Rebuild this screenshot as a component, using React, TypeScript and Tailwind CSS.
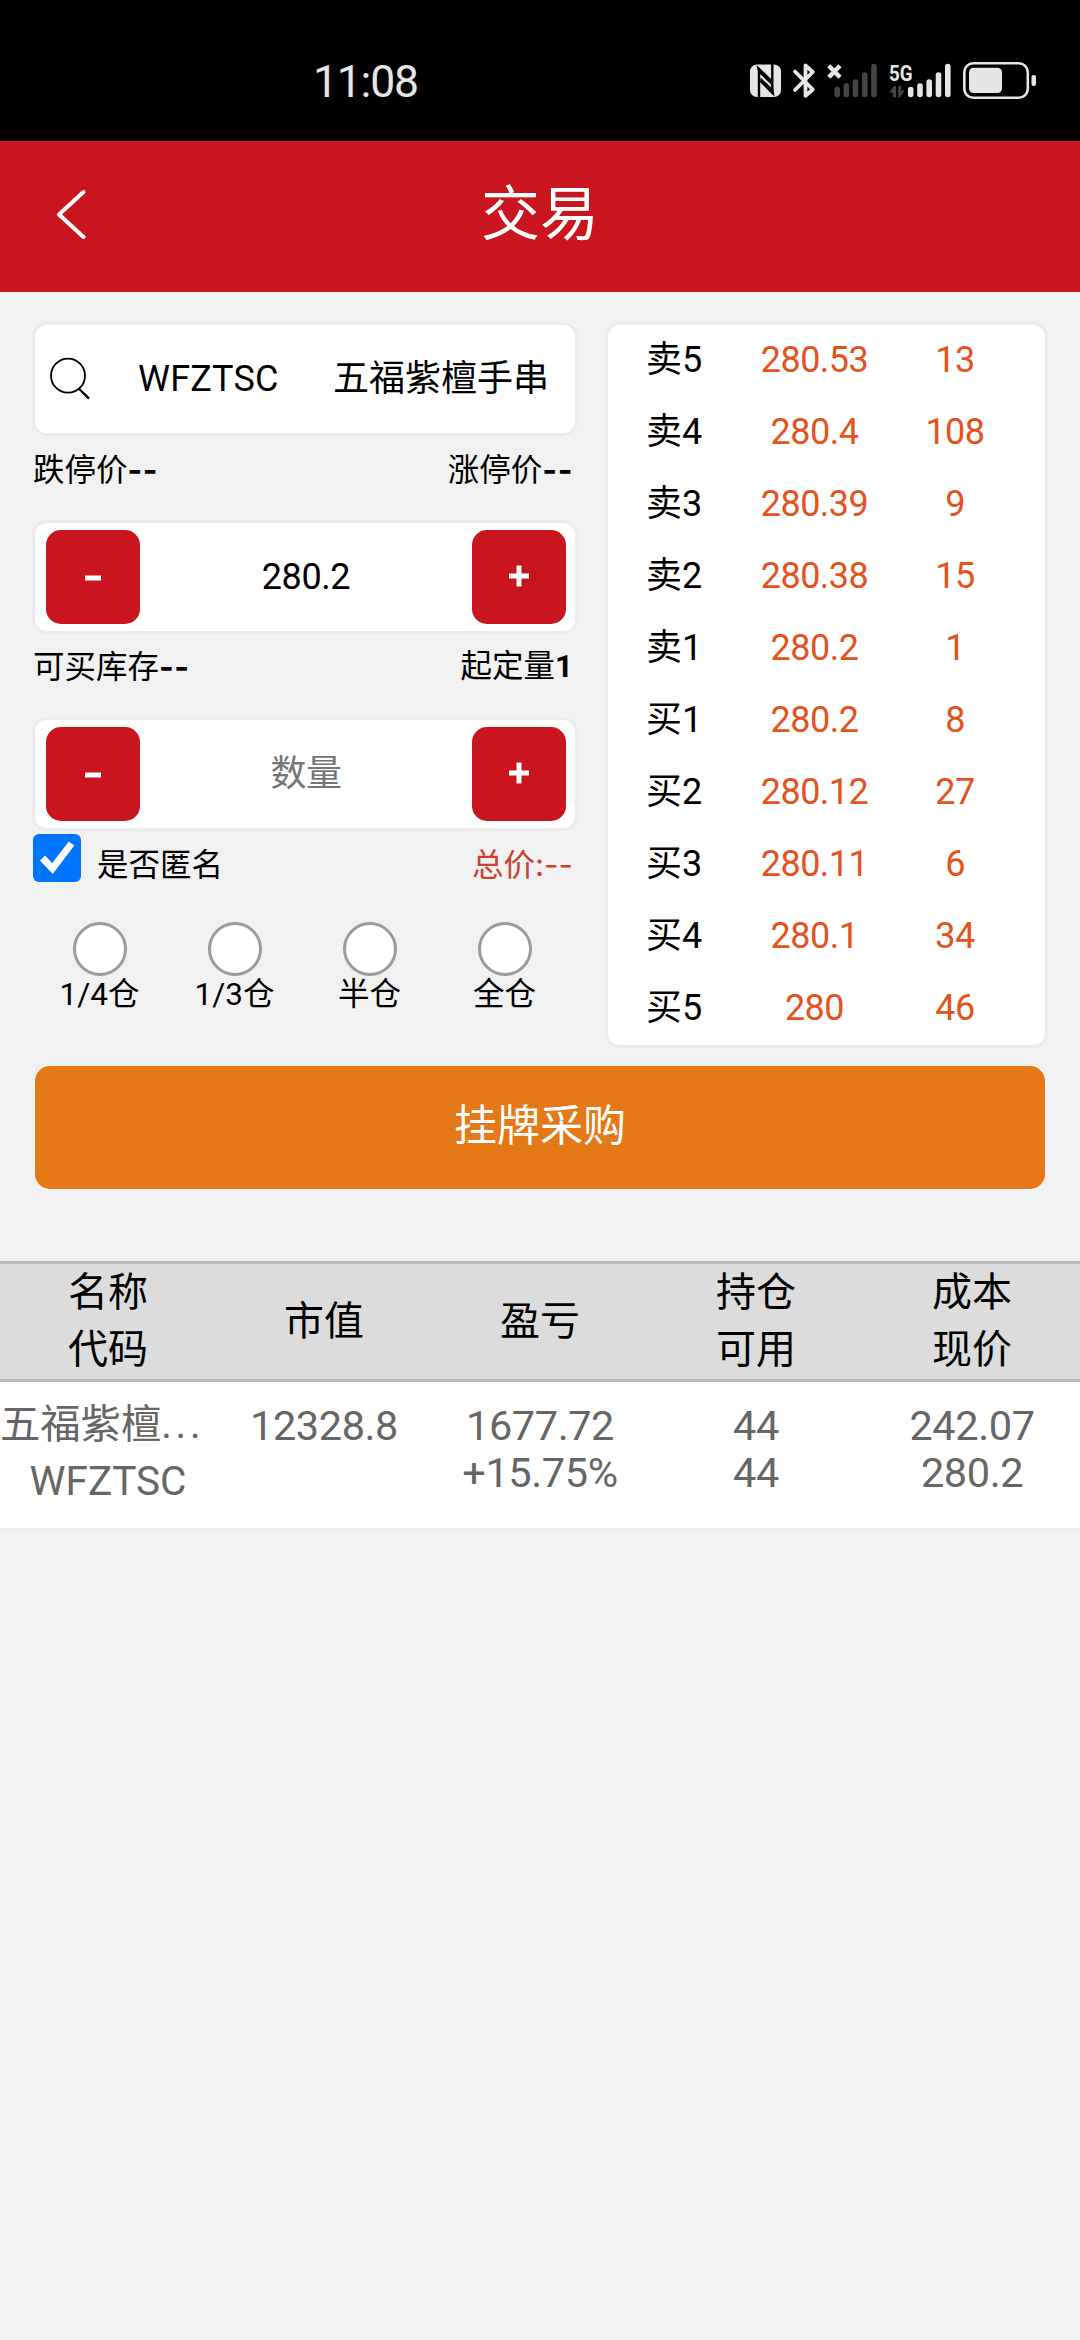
import { ReactNode, useState } from "react"

type Quote = {
  label: string
  price: string
  amount: string
}

type StepperProps = {
  value: string
  placeholder?: string
}

const quotes: Quote[] = [
  { label: "卖5", price: "280.53", amount: "13" },
  { label: "卖4", price: "280.4", amount: "108" },
  { label: "卖3", price: "280.39", amount: "9" },
  { label: "卖2", price: "280.38", amount: "15" },
  { label: "卖1", price: "280.2", amount: "1" },
  { label: "买1", price: "280.2", amount: "8" },
  { label: "买2", price: "280.12", amount: "27" },
  { label: "买3", price: "280.11", amount: "6" },
  { label: "买4", price: "280.1", amount: "34" },
  { label: "买5", price: "280", amount: "46" },
]

const positions = ["1/4仓", "1/3仓", "半仓", "全仓"]

const headers = [["名称", "代码"], ["市值"], ["盈亏"], ["持仓", "可用"], ["成本", "现价"]]

const cells = [["12328.8"], ["1677.72", "+15.75%"], ["44", "44"], ["242.07", "280.2"]]

const StatusIcons = () => (
  <svg className="h-[44px] w-[292px] shrink-0" viewBox="748 58 292 44" fill="none">
    {/* NFC */}
    <rect x="750" y="64.5" width="31" height="32.5" rx="7" fill="#e6e6e6" />
    <path d="M759 97V69L771.5 81" stroke="#000" strokeWidth="2.4" />
    <path d="M756.5 65L771 79.5V84.5L758 72Z" fill="#000" />
    <path d="M772.3 64V92.5L760.5 80.5" stroke="#000" strokeWidth="2.4" />
    <path d="M774.5 96.5L760.5 82.5V77.5L773.5 89.5Z" fill="#000" />
    {/* bluetooth */}
    <path
      d="M795 71.5L812.8 89.5L805.5 95.8V65.5L812.8 72L795 90"
      stroke="#e6e6e6"
      strokeWidth="3.8"
      strokeLinecap="round"
      strokeLinejoin="round"
    />
    {/* sim 1, no service */}
    <path d="M828.8 65.7L840 77.3M840 65.7L828.8 77.3" stroke="#e6e6e6" strokeWidth="4.4" />
    <path
      d="M837.2 89.5V94.5M846.4 86V94.5M855.5 82V94.5M864.8 75V94.5M874 66.5V94.5"
      stroke="#444"
      strokeWidth="5.6"
      strokeLinecap="round"
    />
    {/* sim 2 */}
    <text x="889" y="80.5" fill="#e6e6e6" fontSize="22.5" fontWeight="700" fontFamily="Roboto, sans-serif" textLength="23.5" lengthAdjust="spacingAndGlyphs">5G</text>
    <path d="M889.3 92.5L894 86H896V97.3H892.8V92.5ZM898.3 86H901.3V90.5H904.5L900.3 97.3H898.3Z" fill="#444" />
    <path
      d="M910.7 89.5V94.5M920 86V94.5M929.2 82V94.5M938.5 75V94.5M947.8 66.5V94.5"
      stroke="#e6e6e6"
      strokeWidth="5.6"
      strokeLinecap="round"
    />
    {/* battery */}
    <rect x="964.3" y="63.3" width="63.5" height="34.5" rx="9" stroke="#e6e6e6" strokeWidth="2.6" />
    <rect x="969" y="67.7" width="33" height="25.3" rx="4.5" fill="#e6e6e6" />
    <rect x="1031.5" y="75" width="4.5" height="11" rx="2" fill="#e6e6e6" />
  </svg>
)

const StepButton = ({ children, onClick }: { children: ReactNode; onClick?: () => void }) => (
  <button
    onClick={onClick}
    className="flex h-[94px] w-[94px] shrink-0 items-center justify-center rounded-[15px] bg-[#c9151e] text-white"
  >
    {children}
  </button>
)

const Stepper = ({ value, placeholder }: StepperProps) => {
  const [current, setCurrent] = useState(value)

  const step = (delta: number) => {
    const next = Math.max(0, Number(current || 0) + delta)
    setCurrent(String(Number(next.toFixed(2))))
  }

  return (
    <div className="flex h-[114px] w-[546px] items-center rounded-[15px] border-3 border-[#ebebeb] bg-white pr-[9px] pl-[11px]">
      <StepButton onClick={() => step(-1)}>
        <svg className="h-6 w-6" viewBox="0 0 24 24">
          <path d="M4 13H20" stroke="#fff" strokeWidth="5" />
        </svg>
      </StepButton>
      <input
        className="h-full min-w-0 flex-1 bg-transparent text-center text-[36px] tracking-[-0.4px] text-black outline-none placeholder:text-[#757575]"
        value={current}
        placeholder={placeholder}
        onChange={(e) => setCurrent(e.target.value)}
      />
      <StepButton onClick={() => step(1)}>
        <svg className="h-6 w-6" viewBox="0 0 24 24">
          <path d="M2 11H22M12 0.5V21.5" stroke="#fff" strokeWidth="5" />
        </svg>
      </StepButton>
    </div>
  )
}

const OrderForm = () => {
  const [anonymous, setAnonymous] = useState(true)

  return (
    <div className="w-[546px] text-[31.5px] leading-[46px]">
      <div className="flex h-[114px] items-center rounded-[15px] border-3 border-[#ebebeb] bg-white text-[36px]">
        <svg className="ml-[13px] h-[44px] w-[44px] shrink-0" viewBox="0 0 44 44" fill="none" stroke="#000">
          <circle cx="20" cy="18.7" r="17" strokeWidth="1.8" />
          <path d="M30.7 31.5L41 41.7" strokeWidth="2.4" />
        </svg>
        <span className="ml-[46px] tracking-[0.2px]">WFZTSC</span>
        <span className="ml-auto mr-[26px]">五福紫檀手串</span>
      </div>

      <div className="flex h-[84px] justify-between pt-[11px] pr-[5px] pl-px">
        <span>跌停价<b className="font-[Inter] tracking-[0.6px]">--</b></span>
        <span>涨停价<b className="font-[Inter] tracking-[0.6px]">--</b></span>
      </div>
      <Stepper value="280.2" />

      <div className="flex h-[83px] justify-between pt-[10px] pr-[5px] pl-px">
        <span>可买库存<b className="font-[Inter] tracking-[0.6px]">--</b></span>
        <span>起定量<b>1</b></span>
      </div>
      <Stepper value="" placeholder="数量" />

      <div className="flex h-[91px] pt-[3px] pr-[5px]">
        <button
          className="ml-[1px] flex h-[48px] w-[48px] items-center justify-center rounded-[6px] bg-[#0075ff]"
          onClick={() => setAnonymous(!anonymous)}
        >
          {anonymous && (
            <svg className="h-[48px] w-[48px]" viewBox="0 0 48 48" fill="none">
              <path d="M9.5 24L19.5 34.5L38.5 9.5" stroke="#fff" strokeWidth="7" />
            </svg>
          )}
        </button>
        <span className="ml-4 pt-[9px]">是否匿名</span>
        <span className="ml-auto pt-[8px] text-[#cb4130]">总价<span className="font-[Inter]">:--</span></span>
      </div>

      <div className="grid w-[540px] grid-cols-4">
        {positions.map((name) => (
          <label key={name} className="flex flex-col items-center">
            <span className="h-[54px] w-[54px] rounded-full border-3 border-[#9b9b9b] bg-white" />
            <span className="-mt-[4px]">{name}</span>
          </label>
        ))}
      </div>
    </div>
  )
}

const QuoteBoard = () => (
  <div className="h-[726px] w-[443px] rounded-[15px] border-3 border-[#ebebeb] bg-white text-[36px]">
    {quotes.map((q) => (
      <div key={q.label} className="flex h-[72px] items-center pb-[2px] text-center">
        <span className="w-[132px]">{q.label}</span>
        <span className="w-[149px] tracking-[-0.5px] text-[#e2531d]">{q.price}</span>
        <span className="w-[132px] tracking-[-0.5px] text-[#e2531d]">{q.amount}</span>
      </div>
    ))}
  </div>
)

const Holdings = () => (
  <div className="mt-[72px]">
    <div className="grid h-[121px] grid-cols-5 items-center border-y-3 border-[#bcbcbc] bg-[#dcdcdc] pb-[3px] text-center text-[40px] leading-[57px]">
      {headers.map((lines) => (
        <div key={lines[0]}>
          {lines.map((line) => (
            <div key={line}>{line}</div>
          ))}
        </div>
      ))}
    </div>
    <div className="grid h-[149px] grid-cols-5 border-b-3 border-[#ebebeb] bg-white text-center text-[#666]">
      <div className="pt-[14px] text-[40.3px] leading-[57px]">
        <div className="text-left whitespace-nowrap">
          五福紫檀<span className="tracking-[3.8px]">...</span>
        </div>
        <div className="text-[40.5px]">WFZTSC</div>
      </div>
      {cells.map((lines) => (
        <div key={lines[0]} className="pt-[20px] text-[41.5px] leading-[47px] tracking-[-0.4px]">
          {lines.map((line, i) => (
            <div key={i}>{line}</div>
          ))}
        </div>
      ))}
    </div>
  </div>
)

export default function App() {
  return (
    <div className="h-[2340px] w-[1080px] overflow-hidden bg-[#f1f1f1] font-[Roboto,'Noto_Sans_CJK_SC',sans-serif] text-black">
      <div className="flex h-[141px] items-center justify-between bg-black pr-10 pl-[313px]">
        <span className="pt-[22px] text-[44.5px] leading-[46px] tracking-[-1.2px] text-[#e6e6e6]">11:08</span>
        <div className="pt-[19px]">
          <StatusIcons />
        </div>
      </div>

      <header className="grid h-[151px] grid-cols-[140px_1fr_140px] items-center bg-[#c9151e] text-white">
        <svg className="mb-[5px] ml-[54px] h-[50px] w-[34px]" viewBox="0 0 34 50" fill="none">
          <path d="M29.5 3L5 25.5L29.5 48" stroke="#fff" strokeWidth="4" strokeLinecap="round" strokeLinejoin="round" />
        </svg>
        <h1 className="pb-1 text-center text-[59px] leading-[80px]">交易</h1>
      </header>

      <main>
        <div className="flex justify-between pt-[30px] pr-8 pl-8">
          <OrderForm />
          <QuoteBoard />
        </div>
        <button className="mx-[35px] mt-[18px] flex h-[123px] w-[1010px] items-center justify-center rounded-[15px] bg-[#e57817] pb-[3px] text-[43px] text-white">
          挂牌采购
        </button>
        <Holdings />
      </main>
    </div>
  )
}
